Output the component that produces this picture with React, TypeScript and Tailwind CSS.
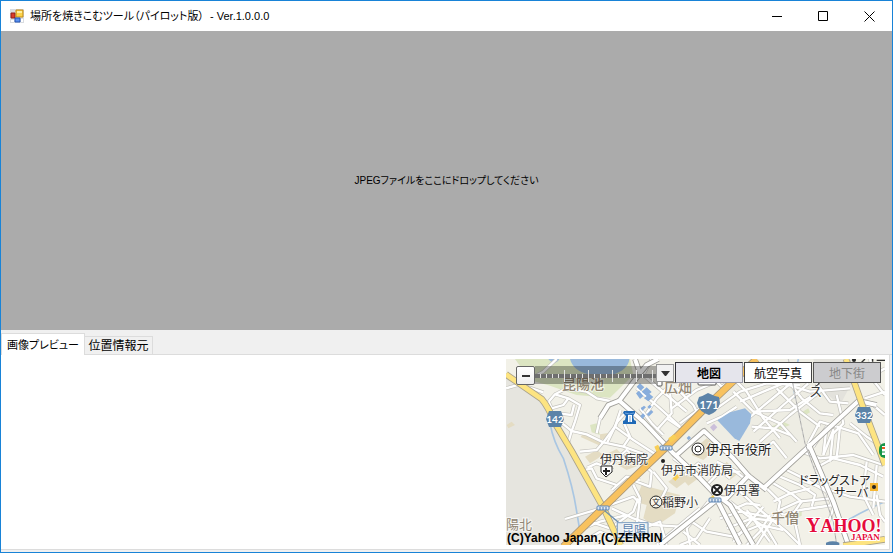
import { useState } from "react";

const uiFont =
  "font-['Liberation_Sans','Noto_Sans_CJK_JP',sans-serif] [font-feature-settings:'palt']";
const mapFont = "font-['Noto_Sans_CJK_JP',sans-serif]";

const streets = [
  // north-west
  "M18 100L60 88L130 50L170 12", "M60 88L130 112", "M146 140L165 118L205 130L240 150L225 200L215 228",
  "M146 140L155 160L190 150L205 130", "M165 118L200 100L260 110L290 130L330 138", "M175 175L215 180L222 150",
  "M188 206L215 228L260 238L310 262L370 275L440 300", "M215 228L205 262", "M310 262L345 215L362 165",
  "M290 235L300 190L330 150", "M322 262L352 200L375 175", "M345 215L400 255L470 300",
  "M310 262L290 285L240 290", "M370 275L390 245L372 205", "M330 330L380 285L440 340",
  "M262 338L290 325L340 345", "M440 175L470 130L500 100", "M410 100L480 160L540 215",
  "M455 12L430 60L500 120L560 170", "M420 160L455 205L490 240", "M470 225L515 175L510 110",
  "M500 190L560 230", "M515 160L590 105L650 80", "M540 205L600 160", "M530 100L580 150L600 190",
  // north
  "M640 70L665 95L720 60", "M690 60L740 110L790 190L840 250", "M650 160L720 110L800 85L900 90",
  "M720 140L790 110L850 85L930 110L1050 100", "M745 190L830 120L890 70", "M760 230L850 150L925 85",
  "M780 260L870 180L960 110", "M700 110L760 170L870 165L940 120", "M760 170L840 205L890 260",
  "M830 100L900 170L960 215", "M755 215L820 220L870 240",
  "M870 85L905 130L960 175L1000 180", "M950 85L990 140L1045 145",
  "M620 205L665 185L710 155", "M610 220L650 270L700 305", "M770 300L820 260L860 310",
  // east
  "M925 265L960 200L1010 215", "M940 275L980 215L970 300", "M905 290L960 310L1060 300L1150 330",
  "M970 300L1000 225L990 320", "M1020 215L1010 310", "M1010 215L1075 235L1120 300",
  "M945 340L1000 310L1080 330L1150 365", "M900 375L960 395L1050 425L1155 440",
  "M1050 205L1100 245L1155 280", "M1120 150L1155 180", "M1115 70L1155 120", "M1095 130L1155 110",
  "M1010 120L1030 205L1000 235", "M1100 320L1090 420L1120 480", "M1130 330L1120 460",
  "M1130 420L1140 480L1155 500", "M1050 12L1015 70", "M1110 12L1120 60L1155 40",
  // south-east rings
  "M800 400L840 440L835 465L850 480", "M820 385L880 420L905 440L880 475", "M840 365L900 390L945 420L935 455",
  "M860 345L930 380L980 410", "M850 480L900 465L1000 450", "M840 465L895 440L990 430", "M820 440L870 415L930 400",
  "M980 410L1000 460L980 520", "M880 480L900 570", "M810 480L780 530L740 570",
  // south
  "M690 440L740 480L800 520L830 570", "M720 410L780 465L860 530L900 570", "M705 460L740 445L780 450",
  "M660 490L720 470L800 485", "M680 520L755 490L840 500", "M695 545L780 510L850 525",
  "M740 465L810 560", "M790 455L750 500L700 560", "M830 475L770 570",
  "M600 460L540 510L470 570", "M625 440L560 520L570 570", "M560 490L620 530L700 545",
  "M550 530L600 570", "M630 490L590 550L540 570", "M400 390L420 430L410 510", "M395 375L450 395L455 350L430 330",
  "M330 450L400 425L420 445", "M335 460L400 490L460 510L540 515", "M345 510L400 470L415 430",
  "M250 520L300 500L380 480", "M195 492L310 458", "M250 560L300 530L330 545", "M270 500L330 520L430 515",
  "M430 520L480 500L500 570", "M460 350L500 400L480 440", "M520 310L600 370L650 420",
  "M555 360L595 325L640 360", "M590 370L640 330L690 370", "M615 395L660 350L720 350",
  "M650 320L700 345L740 375", "M255 345L275 340L290 370L350 390", "M335 405L380 365L420 375",
];

const avenues = [
  "M405 12L420 55L358 137L430 200L520 295L600 370L640 412L720 570",
  "M420 55L440 30L475 12", "M358 137L325 150L300 190", "M530 300L612 228L700 310L745 362L680 430L655 430",
  "M745 362L800 405", "M790 400L1075 138L1130 150", "M925 265L1000 440L1045 570", "M640 412L690 450L760 570",
  "M650 435L480 570",
];

const yards = [
  "M250 232L305 258L300 272L242 246Z", "M300 238L330 233L330 246L300 256Z", "M255 305L290 285L310 300L270 325Z",
  "M315 300L350 282L368 300L325 325Z", "M425 390L540 420L525 475L465 515L430 490L440 450L405 440Z",
  "M590 275L620 250L655 275L610 315L575 300Z", "M505 380L545 350L570 370L530 400Z",
  "M550 375L590 345L605 362L565 392Z", "M20 210L35 200L45 210L25 220Z", "M680 320L715 355L690 375L660 345Z",
  "M345 325L400 310L420 330L380 345Z",
];

const greens = [
  "M45 12L90 75L150 92L230 120L330 128L400 60L390 12Z", "M800 220L850 200L870 210L815 232Z",
  "M900 175L925 160L930 172L908 185Z", "M880 480L905 468L905 482L882 492Z", "M270 210L290 205L300 240L275 232Z",
];

const yellowRoads =
  "M18 58L125 132Q145 155 165 205L215 288L310 458L362 570M1038 12L1085 145L1125 250L1155 330M1155 553L1030 572";
const highway = "M190 575L310 458L400 370L500 275L640 135L770 12";

function RouteBadge({ x, y, label }: { x: number; y: number; label: string }) {
  return (
    <g transform={`translate(${x} ${y})`}>
      <path d="M-6-8H6L9 0L6 8H-6L-9 0Z" fill="#5c83a8" />
      <text y="4" textAnchor="middle" fontSize="10" fill="#fff" className="font-['Lato',sans-serif] font-bold">{label}</text>
    </g>
  );
}

function Crossing({ x, y }: { x: number; y: number }) {
  return (
    <g transform={`translate(${x} ${y})`}>
      <rect x="-6" y="-2" width="12" height="4" rx="1" fill="#dfe8f3" stroke="#5f87b5" />
      <path d="M-3-1V2M0-1V2M3-1V2" stroke="#4d78ab" />
    </g>
  );
}

function CityMap() {
  const places: [number, number, string, number, string][] = [
    [56, 30, "昆陽池", 14, "#918673"],
    [158, 33, "広畑", 14, "#918673"],
    [0, 170, "陽北", 13, "#918673"],
    [265, 164, "千僧", 14, "#918673"],
    [94, 105, "伊丹病院", 12, "#333"],
    [155, 116, "伊丹市消防局", 12, "#333"],
    [200, 95, "伊丹市役所", 13, "#222"],
    [218, 136, "伊丹署", 12, "#333"],
    [156, 148, "稲野小", 12, "#333"],
    [293, 126, "ドラッグストア", 12, "#222"],
    [328, 138, "サーバ", 12, "#222"],
    [116, 176, "昆陽", 12, "#5d83ad"],
    [304, 37, "ス", 13, "#333"],
  ];
  return (
    <svg viewBox="0 0 379 186" className="block h-[186px] w-[379px]" role="img" aria-label="伊丹市の地図">
      <rect width="379" height="186" fill="#f2f1e8" />
      <g transform="translate(-6 -4) scale(.333333)" fill="none" strokeLinejoin="round">
        <path d="M18 60L125 135L165 205L310 458L190 570H18Z" fill="#e6e5df" />
        <path d="M650 12H1045L1080 130L800 400L740 350L610 225L550 270L690 80Z" fill="#eeede4" />
        <path d="M940 12L1035 12L1060 75L1020 150L960 100Z" fill="#e3e2dc" />
        {greens.map((d) => <path key={d} d={d} fill="#dce5c2" />)}
        {yards.map((d) => <path key={d} d={d} fill="#e4dcc3" />)}
        <path d="M210 12Q220 48 265 58L335 60Q385 45 388 12Z" fill="#99b9dc" />
        <path d="M145 12Q165 35 178 12Z" fill="#99b9dc" />
        <path d="M150 205Q160 260 190 310Q220 400 230 470L240 530M1155 440Q1060 480 990 530M895 12L880 80L885 130" stroke="#a9c6e2" strokeWidth="5" />
        {streets.map((d) => <path key={d} d={d} stroke="#c4c3bd" strokeWidth="11" />)}
        {streets.map((d) => <path key={d} d={d} stroke="#fff" strokeWidth="7" />)}
        {avenues.map((d) => <path key={d} d={d} stroke="#a09f9a" strokeWidth="17" />)}
        {avenues.map((d) => <path key={d} d={d} stroke="#fff" strokeWidth="12" />)}
        <path d="M865 12L885 120L915 265L960 390L1000 500L1010 570" stroke="#a8a8a8" strokeWidth="3" />
        <path d="M865 12L885 120L915 265L960 390L1000 500L1010 570" stroke="#fff" strokeWidth="1" strokeDasharray="10 10" />
        <path d={yellowRoads} stroke="#a9a28c" strokeWidth="20" />
        <path d={yellowRoads} stroke="#fde481" strokeWidth="15" />
        <path d={highway} stroke="#a9977a" strokeWidth="23" />
        <path d={highway} stroke="#f8c25f" strokeWidth="18" />
        <path d="M652 196L690 172L735 160L754 178L750 205L718 258L703 250Z" fill="#99b9dc" />
        <path d="M630 217L642 206L652 217L640 229Z" fill="#cbbfda" />
        <g fill="#88addc">
          <path d="M410 95L420 85L433 97L422 107ZM425 110L440 97L455 111L440 123ZM408 115L417 107L430 123L420 132ZM432 130L448 116L460 126L445 139ZM422 160L432 152L438 157L427 167ZM440 178L454 165L460 171L447 184ZM421 183L429 175L436 182L427 192ZM442 156L449 149L455 155L448 161ZM560 249L567 242L573 249L566 256ZM670 405L680 390L686 412Z" />
        </g>
        <path d="M463 275L474 269L482 283L470 291ZM505 250L522 238L531 248L512 263ZM517 370L532 357L540 364L526 378ZM628 430L640 420L645 430L633 440Z" fill="#f8cf58" />
        <path d="M315 468L365 510" stroke="#6d8faf" strokeWidth="4" />
        <rect x="352" y="503" width="92" height="45" fill="#e9eef0" stroke="#8eaac7" strokeWidth="4" />
        <path d="M978 570V563Q998 555 1018 563V570Z" fill="#5c83a8" />
        <path d="M958 84Q954 91 945 95M1095 12L1085 22M1118 12V20M1130 16H1155" stroke="#333" strokeWidth="4" />
      </g>
      <g stroke="#fff" strokeWidth="2" paintOrder="stroke" strokeOpacity=".65">
        {places.map(([x, y, name, size, color]) => (
          <text key={name} x={x} y={y} fontSize={size} fill={color}
            className={`${mapFont} ${size === 14 ? "font-medium" : ""} ${name.startsWith("ド") ? "[font-feature-settings:'palt']" : ""}`}>{name}</text>
        ))}
      </g>
      <RouteBadge x={49} y={60} label="142" />
      <RouteBadge x={358} y={56} label="332" />
      <path d="M193 38Q197 37 202 34Q208 37 213 38L214 44Q212 53 203 56Q193 53 191 44Z" fill="#5c83a8" />
      <text x="203" y="50" textAnchor="middle" fontSize="11" fill="#fff" className="font-['Lato',sans-serif] font-bold">171</text>
      <Crossing x={160} y={89} />
      <Crossing x={97} y={149} />
      <Crossing x={209} y={141} />
      <path d="M118 52H129V54L127 57L128 61L130 62V65H117V62L119 61L120 57L117 54Z" fill="#1e69b7" />
      <path d="M122 56H126V63H122Z" fill="#fff" />
      <path d="M119 54Q123 56 128 54M124 57V63" fill="none" stroke="#6fa4dc" />
      <g fill="none" stroke="#222">
        <circle cx="192" cy="90" r="6" fill="#fff" /><circle cx="192" cy="90" r="3" />
        <circle cx="211" cy="131" r="5" fill="#fff" strokeWidth="2" /><path d="M207 127L215 135M215 127L207 135" strokeWidth="2" />
        <circle cx="150" cy="143" r="6" fill="#f7f5ec" />
        <path d="M95 107H106V113L100 118L95 113Z" fill="#fff" /><path d="M97 112H104M100 109V116" strokeWidth="2" />
      </g>
      <text x="150" y="146" textAnchor="middle" fontSize="8" fill="#222" className={mapFont}>文</text>
      <circle cx="157" cy="102" r="2" fill="#222" />
      <rect x="364" y="124" width="8" height="8" fill="#f5b632" /><circle cx="368" cy="128" r="2" fill="#222" />
      <circle cx="348" cy="1" r="2" fill="#222" />
      <rect x="373" y="84" width="15" height="15" rx="6" fill="#159447" />
      <path d="M376 87H380V96H376Z" fill="#fff" /><path d="M376 89H380" stroke="#e75d25" strokeWidth="2" /><path d="M376 93H380" stroke="#159447" />
      <g fill="#fff" stroke="#555"><rect x="151" y="17" width="5" height="10" rx="1" /><rect x="192" y="15" width="18" height="11" rx="1" /></g>
      <g fill="#e50b3c" stroke="#fff" strokeWidth="2" paintOrder="stroke" className="font-['Liberation_Serif',serif] font-bold">
        <text x="300" y="173" fontSize="18"><tspan fontSize="20">Y</tspan>AHOO!</text>
        <text x="345" y="181" fontSize="9">JAPAN</text>
      </g>
      <text x="1" y="183" fontSize="12" className="font-['Liberation_Sans',sans-serif] font-bold" fill="#000">(C)Yahoo Japan,(C)ZENRIN</text>
    </svg>
  );
}

function MapControls() {
  const [mode, setMode] = useState("地図");
  const modeStyle = (name: string) =>
    mode === name
      ? "border-[#303038] border-r-[#9a9aa8] border-b-[#9a9aa8] bg-[#e5e5ec] font-bold"
      : "border-[#444] bg-white";
  return (
    <div className="absolute inset-x-0 top-0 flex items-start pt-[3px] pr-1 pl-[10px]">
      <button aria-label="縮小" className="mt-1 flex h-[19px] w-[19px] shrink-0 items-center justify-center rounded-xs border border-[#666] bg-linear-to-b from-white to-[#eee]">
        <span className="h-[2px] w-2 bg-[#333]" />
      </button>
      <div className="relative mt-1 h-[18px] min-w-0 flex-1 bg-black/30">
        <svg className="absolute inset-0 h-full w-full" aria-hidden="true">
          <rect y="8" width="100%" height="4" fill="#6e6e6e" />
          <path d="M5.500 8V12M11.500 8V12M17.500 8V12M23.500 8V12M35.500 8V12M41.500 8V12M47.500 8V12M59.500 8V12M65.500 8V12M71.500 8V12M83.500 8V12M89.500 8V12M95.500 8V12M107.500 8V12M29.500 4V16M53.500 4V16M77.500 4V16M101.500 4V16M117.500 4V16" stroke="#e4e4e4" />
        </svg>
        <input type="range" aria-label="縮尺" className="absolute inset-0 h-full w-full opacity-0" />
      </div>
      <button aria-label="縮尺メニュー" className="mt-[2px] mr-px flex h-[18px] w-[18px] shrink-0 items-center justify-center border border-[#999] bg-[#f2f2f2]">
        <svg viewBox="0 0 9 5" className="h-[5px] w-[9px]"><path d="M0 0H9L5 5H4Z" fill="#333" /></svg>
      </button>
      <div className="flex shrink-0 gap-px text-[12px]">
        {["地図", "航空写真"].map((name) => (
          <button key={name} onClick={() => setMode(name)} className={`h-[21px] w-[68px] border pt-px leading-[20px] ${modeStyle(name)}`}>{name}</button>
        ))}
        <button disabled className="h-[21px] w-[68px] border border-[#555] bg-[#cccccf] pt-px leading-[20px] text-[#888]">地下街</button>
      </div>
    </div>
  );
}

function AppIcon() {
  return (
    <svg viewBox="0 0 14 14" className="h-[14px] w-[14px]" aria-hidden="true">
      <path d="M0 0H14V14H0Z" fill="#d9dce0" />
      <path d="M1 4H5V9H1Z" fill="#d93b2b" stroke="#8f1f18" />
      <path d="M6 1H13V8H6Z" fill="#fcd34b" stroke="#c18a16" />
      <path d="M7 2H12V4H7Z" fill="#fff0a0" />
      <path d="M5 9H10V13H5Z" fill="#5a91ef" stroke="#2453b1" />
      <path d="M1 11H4V13H1ZM11 10H13V13H11Z" fill="#fff" />
    </svg>
  );
}

export default function App() {
  const [tab, setTab] = useState(0);
  return (
    <main className={`flex min-h-screen flex-col border border-[#1883d7] bg-[#f0f0f0] text-[12px] text-black ${uiFont}`}>
      <header className="flex h-[30px] shrink-0 items-center bg-white pl-[9px]">
        <AppIcon />
        <h1 className="ml-[6px] flex-1 whitespace-pre text-[11px] font-normal">場所を焼きこむツール（パイロット版）  - Ver.1.0.0.0</h1>
        <button aria-label="最小化" className="flex h-full w-[46px] items-center justify-center">
          <svg className="h-[11px] w-[11px]" viewBox="0 0 11 11"><path d="M0 5.500H10" stroke="#000" /></svg>
        </button>
        <button aria-label="最大化" className="flex h-full w-[46px] items-center justify-center">
          <svg className="h-[11px] w-[11px]" viewBox="0 0 11 11"><path d="M.5.500H9.500V9.500H.5Z" fill="none" stroke="#000" /></svg>
        </button>
        <button aria-label="閉じる" className="flex h-full w-[46px] items-center justify-center">
          <svg className="h-[11px] w-[11px]" viewBox="0 0 11 11"><path d="M.5.5L10.500 10.500M10.500.5L.5 10.500" stroke="#000" /></svg>
        </button>
      </header>
      <section className="flex flex-1 items-center justify-center bg-[#ababab]">
        <p className="text-[10px]">JPEGファイルをここにドロップしてください</p>
      </section>
      <div role="tablist" className="flex h-[25px] shrink-0 items-end border-b border-[#dcdcdc]">
        {["画像プレビュー", "位置情報元"].map((name, i) => (
          <button
            key={name}
            role="tab"
            aria-selected={tab === i}
            onClick={() => setTab(i)}
            className={`border-[#dcdcdc] text-center ${i === 0 ? "w-[84px] text-[11px]" : "w-[68px] text-[12px]"} ${
              tab === i ? "-mb-px h-[22px] border border-b-0 bg-white leading-[20px]" : "h-[18px] border-t border-r leading-[18px]"
            }`}
          >
            {name}
          </button>
        ))}
      </div>
      <section role="tabpanel" className="mr-[2px] mb-[2px] flex shrink-0 justify-end border-r border-b border-[#dcdcdc] bg-white pt-1 pr-1 pb-1">
        <div className="relative w-[379px]">
          <CityMap />
          <MapControls />
        </div>
      </section>
    </main>
  );
}
